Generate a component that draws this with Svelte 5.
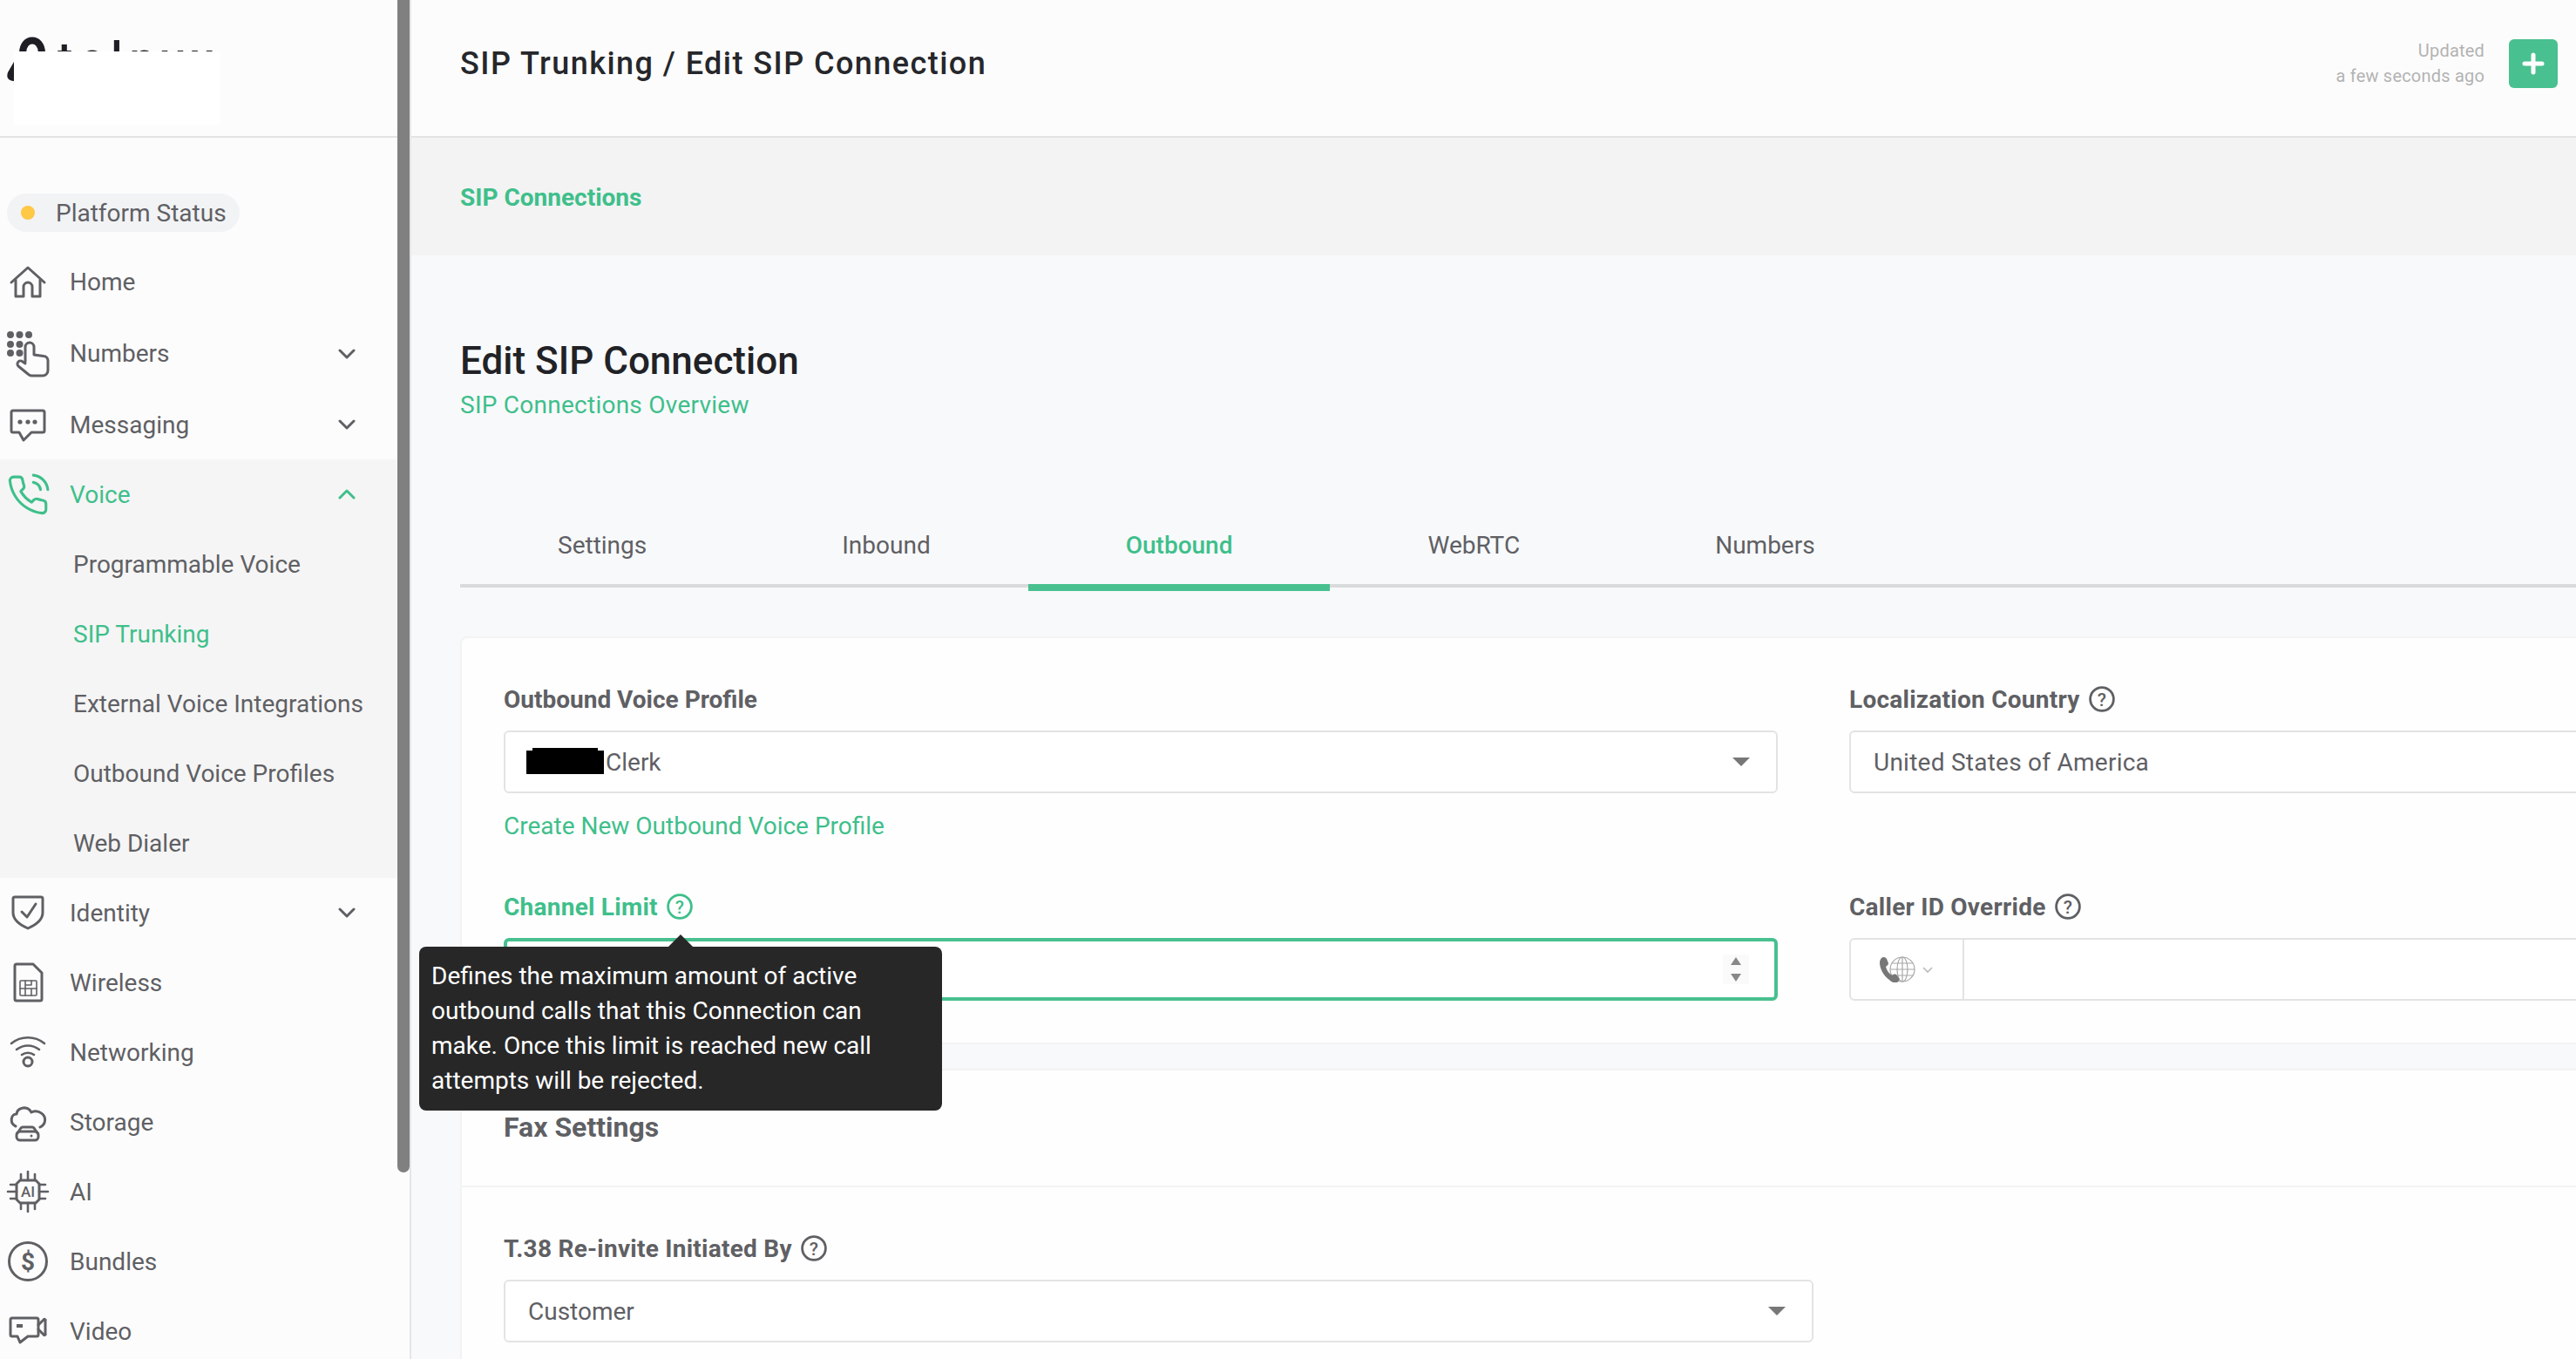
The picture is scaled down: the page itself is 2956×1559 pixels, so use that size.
<script>
  const topItems = [
    { label: 'Home', icon: 'home', tall: true },
    { label: 'Numbers', icon: 'numbers', arrow: true, tall: true },
    { label: 'Messaging', icon: 'messaging', arrow: true }
  ];
  const voiceLinks = ['Programmable Voice', 'SIP Trunking', 'External Voice Integrations', 'Outbound Voice Profiles', 'Web Dialer'];
  const bottomItems = [
    { label: 'Identity', icon: 'identity', arrow: true },
    { label: 'Wireless', icon: 'wireless' },
    { label: 'Networking', icon: 'networking' },
    { label: 'Storage', icon: 'storage' },
    { label: 'AI', icon: 'ai' },
    { label: 'Bundles', icon: 'bundles' },
    { label: 'Video', icon: 'video' }
  ];
  const tabs = ['Settings', 'Inbound', 'Outbound', 'WebRTC', 'Numbers'];
  const activeTab = 'Outbound';
</script>

{#snippet chevron(up)}
  <svg class="chevron" class:up viewBox="0 0 20 12" fill="none" stroke="currentColor" stroke-width="3" stroke-linecap="round" stroke-linejoin="round">
    <path d="M2 2l8 8 8-8" />
  </svg>
{/snippet}

{#snippet help()}
  <svg class="help" viewBox="0 0 30 30">
    <circle cx="15" cy="15" r="13.400" fill="none" stroke="currentColor" stroke-width="2.800" />
    <text x="15" y="22.500" text-anchor="middle" font-size="21" font-weight="500" fill="currentColor">?</text>
  </svg>
{/snippet}

{#snippet caret()}
  <svg class="caret" viewBox="0 0 20 10"><path d="M0 0h20L10 10z" fill="#777" /></svg>
{/snippet}

{#snippet icon(name)}
  <svg class="icon" viewBox="0 0 48 48" fill="none" stroke="currentColor" stroke-width="3" stroke-linecap="round" stroke-linejoin="round">
    {#if name === 'home'}
      <path d="M5 25L24 8l19 17" />
      <path d="M10 22v19h9V30a5 5 0 0 1 10 0v11h9V22" />
    {:else if name === 'numbers'}
      <g fill="currentColor" stroke="none">
        <circle cx="4" cy="2" r="4" /><circle cx="14.500" cy="2" r="4" /><circle cx="25" cy="2" r="4" />
        <circle cx="4" cy="13" r="4" /><circle cx="14.500" cy="13" r="4" />
        <circle cx="4" cy="23" r="4" /><circle cx="14.500" cy="23" r="4" />
      </g>
      <path d="M21 33V16a5 5 0 0 1 10 0v9l11 1.500a5 5 0 0 1 5 5V43a6 6 0 0 1-6 6H28a6 6 0 0 1-4-2L13 38a3.500 3.500 0 0 1 5-5l3 2" />
    {:else if name === 'messaging'}
      <path d="M7 8h34a2 2 0 0 1 2 2v21a2 2 0 0 1-2 2H28l-9 9-5-9H7a2 2 0 0 1-2-2V10a2 2 0 0 1 2-2z" />
      <g fill="currentColor" stroke="none"><circle cx="15" cy="21" r="2.600" /><circle cx="24" cy="21" r="2.600" /><circle cx="32" cy="21" r="2.600" /></g>
    {:else if name === 'voice'}
      <g transform="translate(-1 0) scale(2.080)" stroke-width="1.500">
        <path d="M15.050 5A5 5 0 0 1 19 8.950M15.050 1A9 9 0 0 1 23 8.940m-1 7.980v3a2 2 0 0 1-2.180 2 19.790 19.790 0 0 1-8.630-3.070 19.500 19.500 0 0 1-6-6 19.790 19.790 0 0 1-3.070-8.670A2 2 0 0 1 4.110 2h3a2 2 0 0 1 2 1.720 12.840 12.840 0 0 0 .7 2.810 2 2 0 0 1-.45 2.110L8.090 9.910a16 16 0 0 0 6 6l1.270-1.270a2 2 0 0 1 2.110-.45 12.840 12.840 0 0 0 2.810.7A2 2 0 0 1 22 16.920z" />
      </g>
    {:else if name === 'identity'}
      <path d="M9 6h30a2 2 0 0 1 2 2v16c0 8-8 14-17 18-9-4-17-10-17-18V8a2 2 0 0 1 2-2z" />
      <path d="M17 23l6 6 10-15" />
    {:else if name === 'wireless'}
      <path d="M11 3h19l10 10v30a2 2 0 0 1-2 2H11a2 2 0 0 1-2-2V5a2 2 0 0 1 2-2z" />
      <g stroke-width="1.600">
        <rect x="15" y="22" width="19" height="17" rx="1" />
        <path d="M15 31h19M21 22v9M28 22v5h-7M21 31v8M28 31v8" />
      </g>
    {:else if name === 'networking'}
      <circle cx="24" cy="35" r="5" />
      <path d="M5 14c11-9 27-9 38 0M11 21c8-6 18-6 26 0M17 27c4-3 10-3 14 0" stroke-width="2.600" />
    {:else if name === 'storage'}
      <path d="M10 29C3 26 4 15 11 15c1-8 13-10 17-2 8-4 18 3 15 12-1 3-3 4-5 5" />
      <rect x="11" y="35" width="25" height="10" rx="4" />
      <path d="M12 37l4-6a3 3 0 0 1 2-1h11a3 3 0 0 1 2 1l4 6" />
      <circle cx="28" cy="40" r="1.500" fill="currentColor" stroke="none" />
    {:else if name === 'ai'}
      <path d="M15 11h18l4 4v18l-4 4H15l-4-4V15z" />
      <path d="M16 4v7M24 1v10M32 4v7M16 37v7M24 37v10M32 37v7M4 16h7M1 24h10M4 32h7M37 16h7M37 24h10M37 32h7" stroke-width="2.600" />
      <text x="24" y="30" text-anchor="middle" font-size="17" font-weight="500" fill="currentColor" stroke="none">AI</text>
    {:else if name === 'bundles'}
      <circle cx="24" cy="24" r="21.500" />
      <text x="24" y="34" text-anchor="middle" font-size="28" font-weight="700" fill="currentColor" stroke="none">$</text>
    {:else if name === 'video'}
      <path d="M6 9h28a2 2 0 0 1 2 2v17a2 2 0 0 1-2 2H24l-9 7-3-7H6a2 2 0 0 1-2-2V11a2 2 0 0 1 2-2z" />
      <path d="M36 17l6-6a1 1 0 0 1 2 1v15a1 1 0 0 1-2 1l-6-6" />
      <path d="M11 18h7" stroke-width="4" stroke-linecap="butt" />
    {/if}
  </svg>
{/snippet}

{#snippet navItem(item)}
  <div class="nav-item" class:tall={item.tall}>
    {@render icon(item.icon)}
    <span class="nav-label">{item.label}</span>
    {#if item.arrow}{@render chevron(false)}{/if}
  </div>
{/snippet}

<div class="app">
  <aside class="sidebar">
    <div class="scroll-thumb"></div>
    <div class="logo">
      <svg class="logo-mark" viewBox="0 0 60 60">
        <path d="M26 25C26 5.700 48 5.700 48 25" fill="none" stroke="#1d1f24" stroke-width="8" />
        <path d="M20 28L9 47Q6 56 16 57z" fill="#1d1f24" />
      </svg>
      <span class="logo-text">telnyx</span>
      <div class="logo-mask"></div>
    </div>

    <div class="status"><span class="dot"></span>Platform Status</div>

    {#each topItems as item}
      {@render navItem(item)}
    {/each}

    <div class="group">
      <div class="nav-item active">
        {@render icon('voice')}
        <span class="nav-label">Voice</span>
        {@render chevron(true)}
      </div>
      {#each voiceLinks as link}
        <div class="sub-item" class:active={link === 'SIP Trunking'}>{link}</div>
      {/each}
    </div>

    {#each bottomItems as item}
      {@render navItem(item)}
    {/each}
  </aside>

  <main class="main">
    <header class="topbar">
      <div class="crumb">SIP Trunking / Edit SIP Connection</div>
      <div class="updated">Updated<br />a few seconds ago</div>
      <button class="add" aria-label="Add">
        <svg viewBox="0 0 26 26" width="26" height="26"><path d="M13 3v20M3 13h20" stroke="#fff" stroke-width="5" stroke-linecap="round" /></svg>
      </button>
    </header>

    <div class="subbar">SIP Connections</div>

    <div class="content">
      <h1>Edit SIP Connection</h1>
      <div class="overview">SIP Connections Overview</div>

      <nav class="tabs">
        {#each tabs as tab}
          <div class="tab" class:active={tab === activeTab}>{tab}</div>
        {/each}
      </nav>

      <section class="card">
        <div class="form-grid">
          <div class="field">
            <div class="label plain">Outbound Voice Profile</div>
            <div class="input select">
              <span class="redacted"></span><span>Clerk</span>
              {@render caret()}
            </div>
            <div class="create-link">Create New Outbound Voice Profile</div>
          </div>

          <div class="field">
            <div class="label">Localization Country {@render help()}</div>
            <div class="input country"><span>United States of America</span></div>
          </div>

          <div class="field channel">
            <div class="label focus">Channel Limit {@render help()}</div>
            <div class="input focused">
              <div class="spin">
                <svg viewBox="0 0 14 30" width="14" height="30">
                  <path d="M7 1l6 9H1zM7 29l6-9H1z" fill="#888" />
                </svg>
              </div>
            </div>
            <div class="tooltip">
              Defines the maximum amount of active outbound calls that this Connection can make. Once this limit is reached new call attempts will be rejected.
            </div>
          </div>

          <div class="field">
            <div class="label">Caller ID Override {@render help()}</div>
            <div class="input phone">
              <div class="prefix">
                <svg viewBox="0 0 64 30" width="64" height="30">
                  <g fill="none" stroke="#a8a8a8" stroke-width="1.200">
                    <circle cx="27" cy="15" r="14" />
                    <ellipse cx="27" cy="15" rx="6" ry="14" />
                    <path d="M27 1v28M13 15h28M15 8h24M15 22h24" />
                  </g>
                  <path d="M3 2c2-2 5-1 6 1l2 5c0 2-2 3-3 4 1 4 3 7 7 10 1-1 3-2 5-1l3 4c1 2 0 4-2 5-3 1-6 0-9-3C5 22 1 14 1 7c0-2 1-4 2-5z" fill="#777" />
                  <path d="M51 13l5 5 5-5" fill="none" stroke="#bbb" stroke-width="1.600" />
                </svg>
              </div>
            </div>
          </div>
        </div>

        <div class="band"></div>
        <div class="section-title">Fax Settings</div>

        <div class="fax">
          <div class="label">T.38 Re-invite Initiated By {@render help()}</div>
          <div class="input select wide">
            <span>Customer</span>
            {@render caret()}
          </div>
        </div>
      </section>
    </div>
  </main>
</div>

<style>
  :global(body) {
    margin: 0;
    overflow: hidden;
    font-family: Roboto, 'Liberation Sans', sans-serif;
  }

  .app {
    display: flex;
    width: 2956px;
    height: 1559px;
    overflow: hidden;
    color: #5f6064;
    font-size: 28px;
    background: #f8f9fb;
  }

  .sidebar {
    position: relative;
    flex: 0 0 470px;
    box-sizing: border-box;
    height: 1559px;
    overflow: hidden;
    background: #fcfcfc;
    padding-right: 14px;
  }

  .main {
    flex: 1;
    min-width: 0;
    border-left: 2px solid #e6e6e6;
    overflow: hidden;
  }

  .scroll-thumb {
    position: absolute;
    top: 0;
    right: 0;
    width: 14px;
    height: 1345px;
    background: #808080;
    border-radius: 0 0 7px 7px;
  }

  .logo {
    position: relative;
    height: 156px;
    border-bottom: 2px solid #e3e3e3;
    overflow: hidden;
  }

  .logo-mark {
    position: absolute;
    left: 0;
    top: 36px;
    width: 60px;
    height: 60px;
  }

  .logo-text {
    position: absolute;
    left: 66px;
    top: 38px;
    font-size: 52px;
    line-height: 60px;
    font-weight: 500;
    letter-spacing: 8px;
    color: #1d1f24;
  }

  .logo-mask {
    position: absolute;
    left: 16px;
    top: 59px;
    width: 236px;
    height: 84px;
    background: #fff;
  }

  .status {
    display: flex;
    align-items: center;
    box-sizing: border-box;
    width: 267px;
    height: 44px;
    margin: 64px 0 16px 8px;
    padding-left: 16px;
    border-radius: 22px;
    background: #f2f3f5;
    white-space: nowrap;
  }

  .dot {
    width: 16px;
    height: 16px;
    margin-right: 24px;
    border-radius: 50%;
    background: #ffc845;
  }

  .nav-item {
    display: flex;
    align-items: center;
    height: 80px;
    padding-left: 8px;
  }

  .nav-item.tall {
    height: 82.5px;
  }

  .icon {
    flex: none;
    width: 48px;
    height: 48px;
    overflow: visible;
  }

  .nav-label {
    flex: 1;
    margin-left: 24px;
  }

  .chevron {
    width: 20px;
    height: 12px;
    margin-right: 48px;
  }

  .chevron.up {
    transform: rotate(180deg);
  }

  .group {
    background: #f5f5f5;
  }

  .nav-item.active,
  .sub-item.active {
    color: #3fbf8b;
  }

  .sub-item {
    height: 80px;
    line-height: 81px;
    padding-left: 84px;
    white-space: nowrap;
  }

  .topbar {
    display: flex;
    align-items: center;
    box-sizing: border-box;
    height: 158px;
    padding: 0 21px 10px 56px;
    border-bottom: 2px solid #e3e3e3;
    background: #fcfcfc;
  }

  .crumb {
    flex: 1;
    font-size: 36px;
    font-weight: 500;
    letter-spacing: 1.45px;
    color: #26272b;
  }

  .updated {
    margin-right: 28px;
    text-align: right;
    font-size: 20px;
    letter-spacing: 0.2px;
    line-height: 29px;
    color: #b3b3b3;
  }

  .add {
    display: flex;
    align-items: center;
    justify-content: center;
    width: 56px;
    height: 56px;
    padding: 0;
    border: 0;
    border-radius: 6px;
    background: #48c08f;
  }

  .subbar {
    box-sizing: border-box;
    height: 135px;
    line-height: 137px;
    padding-left: 56px;
    background: #f3f3f3;
    color: #3fbf8b;
    font-weight: 700;
  }

  .content {
    padding: 93px 0 0 56px;
  }

  h1 {
    margin: 0 0 4px;
    font-size: 44px;
    line-height: 56px;
    font-weight: 500;
    color: #212226;
  }

  .overview {
    line-height: 38px;
    margin-bottom: -2px;
    letter-spacing: 0.25px;
    color: #3fbf8b;
  }

  .tabs {
    display: flex;
    margin-top: 98px;
    border-bottom: 4px solid #d9dadc;
  }

  .tab {
    position: relative;
    height: 90px;
    line-height: 92px;
    padding: 0 112px;
  }

  .tab.active {
    color: #3fbf8b;
    font-weight: 500;
  }

  .tab.active::after {
    content: '';
    position: absolute;
    left: 0;
    right: 0;
    top: 100%;
    height: 8px;
    background: #48c08f;
  }

  .card {
    box-sizing: border-box;
    width: 2700px;
    height: 900px;
    margin-top: 56px;
    border: 2px solid #f3f3f3;
    border-radius: 8px;
    background: #fefefe;
  }

  .form-grid {
    display: grid;
    grid-template-columns: 1462px 1462px;
    column-gap: 82px;
    row-gap: 56px;
    padding: 52px 0 48px 48px;
  }

  .field {
    position: relative;
  }

  .label {
    display: flex;
    align-items: center;
    gap: 10px;
    height: 36px;
    margin-bottom: 18px;
    font-weight: 700;
    letter-spacing: 0.25px;
    white-space: nowrap;
  }

  .label.plain {
    letter-spacing: 0;
  }

  .label.focus {
    color: #3fbf8b;
  }

  .help {
    flex: none;
    width: 30px;
    height: 30px;
  }

  .input {
    position: relative;
    display: flex;
    align-items: center;
    box-sizing: border-box;
    height: 72px;
    padding-left: 26px;
    padding-top: 1px;
    border: 2px solid #e3e3e3;
    border-radius: 6px;
    background: #fff;
  }

  .country {
    letter-spacing: 0.25px;
  }

  .select.wide {
    width: 1503px;
  }

  .redacted {
    position: relative;
    width: 89px;
    height: 27px;
    margin: 0 2px 0 -2px;
    background: #000;
  }

  .redacted::before {
    content: '';
    position: absolute;
    left: 7px;
    right: 7px;
    top: -3px;
    height: 3px;
    background: #000;
  }

  .caret {
    position: absolute;
    right: 30px;
    top: 29px;
    width: 20px;
    height: 10px;
  }

  .create-link {
    margin-top: 20px;
    line-height: 36px;
    color: #3fbf8b;
  }

  .focused {
    border: 4px solid #48c08f;
  }

  .spin {
    position: absolute;
    right: 29px;
    top: 15px;
    display: flex;
    align-items: center;
    justify-content: center;
    width: 30px;
    height: 34px;
    background: #fafafa;
  }

  .phone {
    padding-left: 0;
    padding-top: 0;
  }

  .prefix {
    box-sizing: border-box;
    display: flex;
    align-items: center;
    width: 130px;
    height: 100%;
    padding-left: 32px;
    border-right: 2px solid #e3e3e3;
  }

  .tooltip {
    position: absolute;
    left: -97px;
    top: 64px;
    z-index: 2;
    box-sizing: border-box;
    width: 600px;
    height: 188px;
    padding: 14px;
    border-radius: 8px;
    background: #272727;
    color: #fff;
    line-height: 40px;
  }

  .tooltip::before {
    content: '';
    position: absolute;
    left: 286px;
    top: -14px;
    border-left: 14px solid transparent;
    border-right: 14px solid transparent;
    border-bottom: 14px solid #272727;
  }

  .band {
    box-sizing: border-box;
    height: 32px;
    border-top: 2px solid #f3f3f3;
    border-bottom: 2px solid #f3f3f3;
    background: #f8f9fb;
  }

  .section-title {
    height: 132px;
    line-height: 130px;
    padding-left: 48px;
    border-bottom: 2px solid #f3f3f3;
    font-size: 32px;
    font-weight: 700;
  }

  .fax {
    padding: 52px 0 0 48px;
  }
</style>
